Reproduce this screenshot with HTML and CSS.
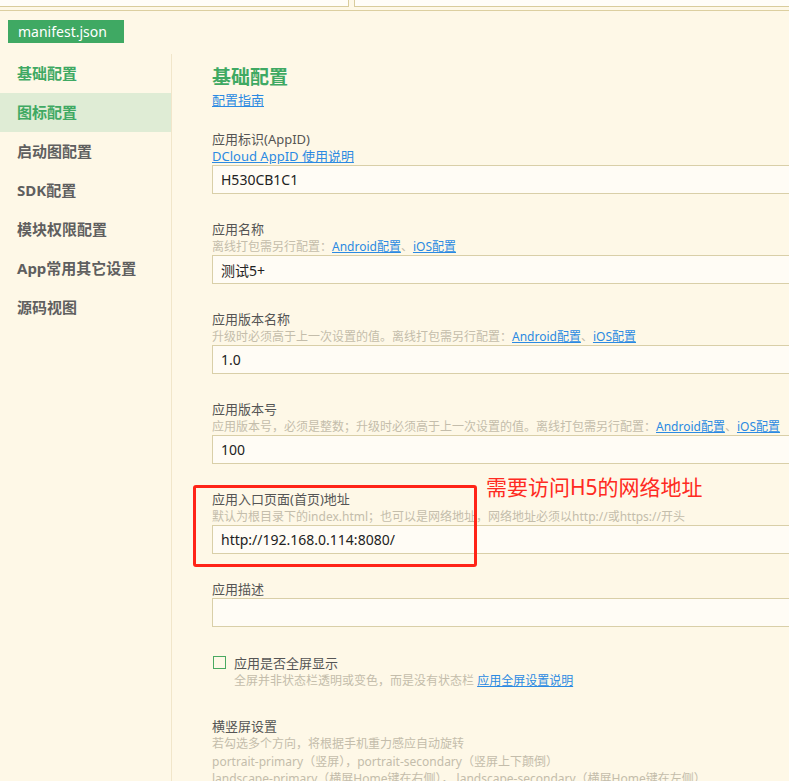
FILE: index.html
```html
<!DOCTYPE html>
<html lang="zh-CN">
<head>
    <meta charset="UTF-8">
    <title>manifest.json</title>
    <link rel="stylesheet" href="styles.css">
</head>
<body>
    <div class="topbar">
        <div class="topbar-box left"></div>
        <div class="topbar-box right"></div>
    </div>

    <div class="tabs">
        <div class="tab">manifest.json</div>
    </div>

    <div class="layout">
        <div class="sidebar">
            <div class="nav-item selected">基础配置</div>
            <div class="nav-item hover">图标配置</div>
            <div class="nav-item">启动图配置</div>
            <div class="nav-item">SDK配置</div>
            <div class="nav-item">模块权限配置</div>
            <div class="nav-item">App常用其它设置</div>
            <div class="nav-item">源码视图</div>
        </div>

        <div class="main">
            <h2 class="title">基础配置</h2>
            <a class="guide" href="#">配置指南</a>

            <div class="field first">
                <div class="field-label">应用标识(AppID)</div>
                <a class="field-link" href="#">DCloud AppID 使用说明</a>
                <input class="field-input" type="text" value="H530CB1C1">
            </div>

            <div class="field">
                <div class="field-label">应用名称</div>
                <div class="field-hint">离线打包需另行配置：<a href="#">Android配置</a>、<a href="#">iOS配置</a></div>
                <input class="field-input" type="text" value="测试5+">
            </div>

            <div class="field">
                <div class="field-label">应用版本名称</div>
                <div class="field-hint">升级时必须高于上一次设置的值。离线打包需另行配置：<a href="#">Android配置</a>、<a href="#">iOS配置</a></div>
                <input class="field-input" type="text" value="1.0">
            </div>

            <div class="field">
                <div class="field-label">应用版本号</div>
                <div class="field-hint">应用版本号，必须是整数；升级时必须高于上一次设置的值。离线打包需另行配置：<a href="#">Android配置</a>、<a href="#">iOS配置</a></div>
                <input class="field-input" type="text" value="100">
            </div>

            <div class="field marked">
                <div class="field-label">应用入口页面(首页)地址</div>
                <div class="field-hint">默认为根目录下的index.html；也可以是网络地址，网络地址必须以http://或https://开头</div>
                <input class="field-input" type="text" value="http://192.168.0.114:8080/">
                <div class="mark-box"></div>
                <div class="mark-text">需要访问H5的网络地址</div>
            </div>

            <div class="field last">
                <div class="field-label">应用描述</div>
                <input class="field-input" type="text" value="">
            </div>

            <div class="check-row">
                <span class="checkbox"></span>
                <div>
                    <div class="field-label">应用是否全屏显示</div>
                    <div class="field-hint tall">全屏并非状态栏透明或变色，而是没有状态栏 <a href="#">应用全屏设置说明</a></div>
                </div>
            </div>

            <div class="field orient">
                <div class="field-label">横竖屏设置</div>
                <div class="field-hint tall">若勾选多个方向，将根据手机重力感应自动旋转</div>
                <div class="field-hint">portrait-primary（竖屏），portrait-secondary（竖屏上下颠倒）</div>
                <div class="field-hint">landscape-primary（横屏Home键在右侧），&nbsp;landscape-secondary（横屏Home键在左侧）</div>
            </div>
        </div>
    </div>
</body>
</html>
```

FILE: styles.css
```css
* {
    box-sizing: border-box;
}
body {
    margin: 0;
    background: #fef8e7;
    font-family: "Noto Sans", "Noto Sans CJK SC", sans-serif;
    color: #555;
    overflow: hidden;
}
a {
    color: #2b8ae2;
    text-decoration: underline;
}

/* strip of the editor above */
.topbar {
    height: 11px;
    display: flex;
    gap: 5px;
    border-bottom: 1px solid #dccfa0;
    overflow: hidden;
}
.topbar-box {
    height: 7px;
    background: #fffdf8;
    border: 1px solid #d9cc9c;
    border-top: none;
}
.topbar-box.left {
    width: 350px;
    margin-left: -1px;
}
.topbar-box.right {
    flex: 1;
    margin-right: -2px;
}

.tabs {
    height: 43px;
    padding: 9px 0 0 8px;
}
.tab {
    width: 116px;
    height: 23px;
    background: #3fa963;
    color: #fff;
    font-size: 14px;
    line-height: 23px;
    padding-left: 10px;
}

.layout {
    display: flex;
}
.sidebar {
    width: 172px;
    flex-shrink: 0;
    min-height: 740px;
    border-right: 1px solid #f1e6ca;
}
.nav-item {
    height: 39px;
    line-height: 39px;
    padding-left: 17px;
    font-size: 15px;
    font-weight: bold;
    color: #5f5f5f;
    white-space: nowrap;
}
.nav-item.selected {
    color: #3fa963;
}
.nav-item.hover {
    background: #dfecd5;
    color: #3fa963;
}

.main {
    flex: 1;
    padding: 11px 0 0 40px;
}
.title {
    margin: 0;
    font-size: 19px;
    line-height: 24px;
    font-weight: bold;
    color: #3fa963;
}
.guide {
    display: block;
    width: max-content;
    margin-top: 2px;
    font-size: 13px;
    line-height: 18px;
}

.field {
    position: relative;
    margin-bottom: 26px;
}
.field.first {
    margin-top: 21px;
}
.field.last {
    margin-bottom: 27px;
}
.field-label {
    font-size: 13px;
    line-height: 18px;
    color: #555;
    white-space: nowrap;
}
.field-link {
    display: block;
    width: max-content;
    font-size: 13px;
    line-height: 17px;
}
.field-hint {
    font-size: 12px;
    line-height: 17px;
    color: #c4bdab;
    white-space: nowrap;
}
.field-hint.tall {
    line-height: 18px;
}
.field-input {
    display: block;
    width: 640px;
    height: 29px;
    margin: 0;
    padding: 0 8px;
    border: 1px solid #d9cfa8;
    background: #fffcf5;
    font-family: "Noto Sans", "Noto Sans CJK SC", sans-serif;
    font-size: 14px;
    color: #222;
    outline: none;
}

/* red annotation from the screenshot */
.mark-box {
    position: absolute;
    left: -19px;
    top: -5px;
    width: 284px;
    height: 82px;
    border: 3px solid #ff2418;
    border-radius: 3px;
}
.mark-text {
    position: absolute;
    left: 274px;
    top: -17px;
    font-size: 21px;
    line-height: 28px;
    color: #ff2a22;
    white-space: nowrap;
}

.check-row {
    display: flex;
    gap: 8px;
    align-items: flex-start;
}
.checkbox {
    width: 13px;
    height: 13px;
    margin: 2px 0 0 1px;
    border: 1px solid #4aa961;
    flex-shrink: 0;
}
.field.orient {
    margin-top: 27px;
}
```
